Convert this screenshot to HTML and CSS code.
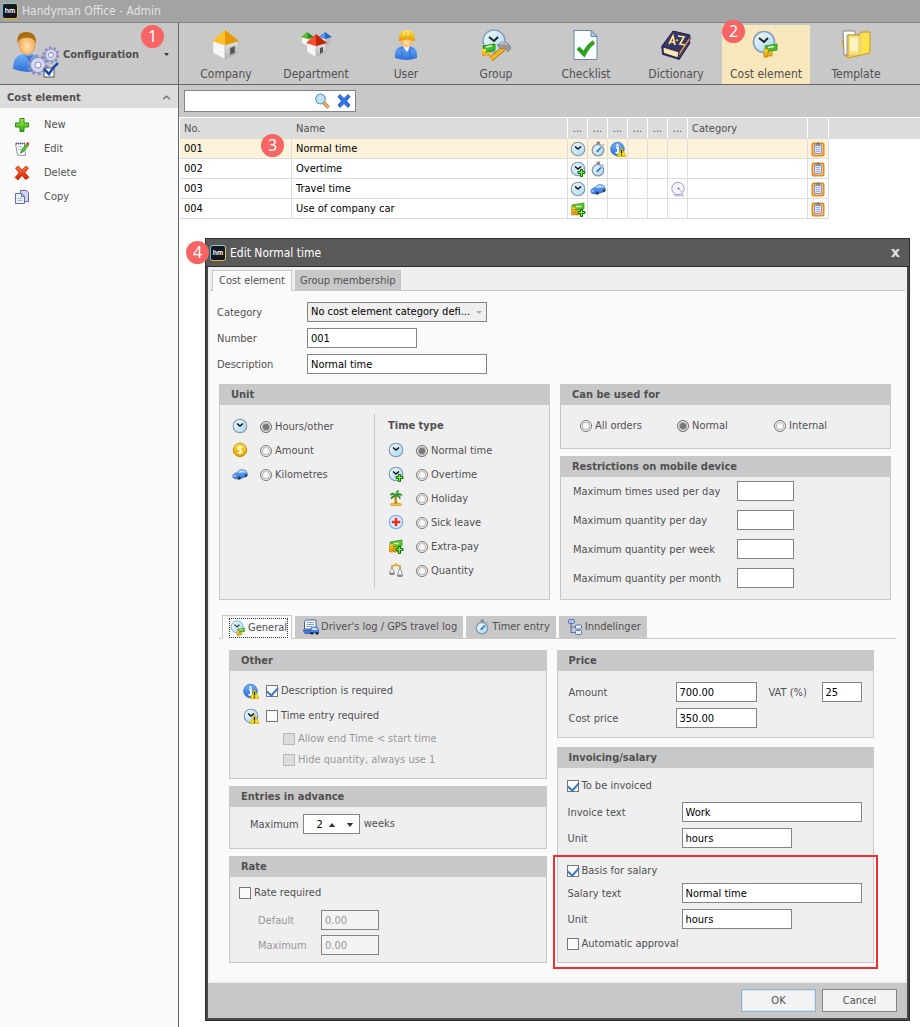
FILE: index.html
```
<!DOCTYPE html>
<html lang="en">
<head>
  <meta charset="UTF-8" />
  <meta name="viewport" content="width=device-width, initial-scale=1.0" />
  <title>Handyman Office - Admin</title>
  <link rel="stylesheet" href="styles.css">
</head>
<body>
  <!-- shared icons -->
  <svg class="sprite" aria-hidden="true">
    <defs>
      <linearGradient id="g-face" x1="0" y1="0" x2="1" y2="1"><stop offset="0" stop-color="#f4fbff"/><stop offset="1" stop-color="#a5d6f0"/></linearGradient>
      <linearGradient id="g-blue" x1="0" y1="0" x2="0" y2="1"><stop offset="0" stop-color="#6db0fa"/><stop offset="1" stop-color="#2f70d8"/></linearGradient>
      <linearGradient id="g-gold" x1="0" y1="0" x2="0" y2="1"><stop offset="0" stop-color="#ffe04a"/><stop offset="1" stop-color="#e09a00"/></linearGradient>
      <linearGradient id="g-green" x1="0" y1="0" x2="0" y2="1"><stop offset="0" stop-color="#a4f04a"/><stop offset="1" stop-color="#35ac10"/></linearGradient>
      <linearGradient id="g-red" x1="0" y1="0" x2="0" y2="1"><stop offset="0" stop-color="#ff7040"/><stop offset="1" stop-color="#d02000"/></linearGradient>
      <linearGradient id="g-wall" x1="0" y1="0" x2="0" y2="1"><stop offset="0" stop-color="#e4e4e4"/><stop offset="1" stop-color="#b4b4b4"/></linearGradient>
      <radialGradient id="g-skin" cx="0.5" cy="0.6" r="0.6"><stop offset="0" stop-color="#ffe2b0"/><stop offset="1" stop-color="#f4a048"/></radialGradient>
    </defs>
    <symbol id="clock" viewBox="0 0 16 16">
      <circle cx="8" cy="8" r="6.8" fill="url(#g-face)" stroke="#7d93a8" stroke-width="1.1"/>
      <path d="M5 5.5 8 8l3-2.500" fill="none" stroke="#111" stroke-width="1.5"/>
    </symbol>
    <symbol id="plus-small" viewBox="0 0 16 16">
      <path d="M10.5 8.5h2v2h2.500v2h-2.500v3h-2v-3H8v-2h2.500z" fill="#8af040" stroke="#0b6a0b" stroke-width="1"/>
    </symbol>
    <symbol id="warn-small" viewBox="0 0 16 16">
      <path d="M11.5 6.500 16 15.500H7z" fill="#ffe400" stroke="#b89a00" stroke-width=".6"/>
      <path d="M11.5 9v3.500M11.5 13.500v1.200" stroke="#111" stroke-width="1.3"/>
    </symbol>
    <symbol id="clock-plus" viewBox="0 0 16 16"><use href="#clock"/><use href="#plus-small"/></symbol>
    <symbol id="clock-warn" viewBox="0 0 16 16"><use href="#clock"/><use href="#warn-small"/></symbol>
    <symbol id="info-warn" viewBox="0 0 16 16">
      <circle cx="7.5" cy="8" r="6.8" fill="url(#g-blue)" stroke="#1450b8" stroke-width=".6"/>
      <path d="M7.5 3v2M6 6.500h2v5M5.500 11.800h4" fill="none" stroke="#fff" stroke-width="1.8"/>
      <use href="#warn-small"/>
    </symbol>
    <symbol id="stopwatch" viewBox="0 0 16 16">
      <path d="M7 1h2.500v2H7zM12.500 3l1.500 1.500" fill="#999" stroke="#888"/>
      <circle cx="8" cy="9.200" r="5.700" fill="url(#g-face)" stroke="#8d98a4" stroke-width="1.300"/>
      <path d="M7.500 10 11 6.500" stroke="#2468c0" stroke-width="1.400"/><circle cx="7.500" cy="10" r="1" fill="#2468c0"/>
    </symbol>
    <symbol id="car" viewBox="0 0 16 16">
      <path d="M.6 9.500Q2 6.800 5 6.400L7.500 3.900Q11 3 14 4.600L15.600 8 15 10.400 7 13.300 2 12.500Q.4 11.500.6 9.500z" fill="url(#g-blue)" stroke="#2c66c0" stroke-width=".5"/>
      <path d="M5.800 6.600 8 4.800l3-.4v2zM11.600 4.400l1.800.7.6 1.200-2.400.2z" fill="#d9ecff"/>
      <ellipse cx="7.300" cy="12" rx="1.400" ry="1.600" fill="#333"/><ellipse cx="14" cy="9.500" rx="1.100" ry="1.500" fill="#333"/>
      <path d="M1.500 10h2.500" stroke="#e8f4ff"/>
    </symbol>
    <symbol id="dish" viewBox="0 0 16 16">
      <path d="M4 12.500h8l2 2.500H5z" fill="#d4d4f0" stroke="#9a9ad0" stroke-width=".6"/>
      <circle cx="8" cy="7.500" r="6.200" fill="#f6f6ff" stroke="#9a9ad0" stroke-width="1"/>
      <path d="M12 11 8 7.500" stroke="#b0b0dc"/><circle cx="8.500" cy="7.500" r="1" fill="#6868b0"/>
    </symbol>
    <symbol id="money" viewBox="0 0 16 16">
      <path d="M2 4 14 2v6L3 9z" fill="#58c828" stroke="#258a10" stroke-width=".7"/>
      <path d="M6 5.500h5" stroke="#eaffd0" stroke-width="1.400"/>
      <path d="M1.500 6h4v8h-4zM6 9h4v5H6z" fill="url(#g-gold)" stroke="#b88400" stroke-width=".6"/>
      <path d="M1.500 8.500h4M1.500 11h4" stroke="#b88400" stroke-width=".7"/>
    </symbol>
    <symbol id="money-plus" viewBox="0 0 16 16"><use href="#money"/><use href="#plus-small"/></symbol>
    <symbol id="clipboard" viewBox="0 0 16 16">
      <rect x="2.500" y="2.500" width="11" height="12" rx="1" fill="#fff" stroke="#e68a1c" stroke-width="2"/>
      <rect x="4.500" y="4.500" width="7" height="8" fill="#dfe3f4" stroke="#7480a8" stroke-width=".8"/>
      <path d="M5.500 3.800V2.200h1.500a1 1 0 0 1 2 0h1.500v1.600z" fill="#777"/>
      <path d="M6 6.500h4M6 8.500h4M6 10.500h4" stroke="#a4acd0"/>
    </symbol>
    <symbol id="coin" viewBox="0 0 16 16">
      <circle cx="8" cy="8" r="6.700" fill="url(#g-gold)" stroke="#c99200" stroke-width="1"/>
      <path d="M10.500 5.500Q8 4 6.300 5.200 5 7 8 7.900 11 8.800 9.800 10.600 8 12 5.500 10.400M8 3.500v9" fill="none" stroke="#fff8d0" stroke-width="1.400"/>
    </symbol>
    <symbol id="palm" viewBox="0 0 16 16">
      <path d="M2 14q5-3 12 0l-1 1.500H3z" fill="#f2c53c" stroke="#cf9410" stroke-width=".6"/>
      <path d="M8 5q-1 4 0 9" fill="none" stroke="#c87a18" stroke-width="2.200"/>
      <path d="M8 5Q4 1 2 5q3-1 4 1-3 0-3 3 3-2 5-3 3 0 4 3 1-3-2-4 2-1 4 1-1-4-5-2 0-2 2-3-3-1-3 4z" fill="#2fa52c" stroke="#17781a" stroke-width=".6"/>
    </symbol>
    <symbol id="sick" viewBox="0 0 16 16">
      <circle cx="8" cy="8" r="6.700" fill="#e0f0ff" stroke="#7ab2f0" stroke-width="1.300"/>
      <path d="M6.800 3.800h2.500v3h3v2.500h-3v3H6.800v-3h-3V6.800h3z" fill="#f02a1c"/>
    </symbol>
    <symbol id="scales" viewBox="0 0 16 16">
      <path d="M3 4.500 8 3l5 1.500" fill="none" stroke="#dba31c" stroke-width="1.800"/><circle cx="8" cy="2.500" r="1.300" fill="#e8b424"/>
      <path d="M4 5 1.500 11h5zM12 5 9.500 13h5z" fill="#f6f6f6" stroke="#888" stroke-width=".8"/>
      <path d="M1 11h6l-1 2H2zM9 13h6l-1 2h-4z" fill="#888"/>
    </symbol>
    <symbol id="log" viewBox="0 0 16 16">
      <path d="M3 1h10v9H1.500V3z" fill="#fff" stroke="#3a66b0" stroke-width="1"/>
      <path d="M4 3.500h7M3.500 5.500H11M3.500 7.500H9" stroke="#7d9bd0"/>
      <path d="M0 11h8v3.500H2z" fill="#3e7be0" stroke="#1d3d80" stroke-width=".6"/>
      <path d="M7 11 9 8h5l2 3v3H7z" fill="url(#g-blue)" stroke="#1b4fa8" stroke-width=".6"/>
      <path d="M9.500 9h4l1 2h-5.500z" fill="#cfe4ff"/><circle cx="9" cy="14.300" r="1.400" fill="#222"/><circle cx="14" cy="14.300" r="1.400" fill="#222"/>
    </symbol>
    <symbol id="tree" viewBox="0 0 16 16">
      <path d="M4 4v9.500h5M4 8h5" fill="none" stroke="#5b74a8" stroke-width="1.200"/>
      <g fill="#e9effc" stroke="#5472b0"><rect x="1.500" y=".5" width="6" height="4" rx="1" fill="#a9c2f2"/><rect x="8.500" y="6" width="6" height="4" rx="1"/><rect x="8.500" y="11.500" width="6" height="4" rx="1"/></g>
    </symbol>
    <symbol id="clock-money" viewBox="0 0 32 32">
      <circle cx="14" cy="13" r="10.500" fill="url(#g-face)" stroke="#86a0bc" stroke-width="1.600"/>
      <path d="m9 9 5 4 4-4" fill="none" stroke="#222" stroke-width="2"/>
      <path d="m15 17 12-2v6l-10 2z" fill="#48c02c" stroke="#238a12" stroke-width=".8"/><path d="m18 18.500 6-1" stroke="#e4ffd0" stroke-width="1.500"/>
      <path d="M14 20h4v8h-4zM19 22h3v5h-3z" fill="url(#g-gold)" stroke="#b88400" stroke-width=".7"/>
    </symbol>
    <!-- same drawing, cropped for the tab -->
    <symbol id="clock-money-small" viewBox="2 1 27 28"><use href="#clock-money" width="32" height="32"/></symbol>
    <symbol id="arrow-down" viewBox="0 0 8 5"><path d="M0 0h8L4 5z" fill="#333"/></symbol>
    <symbol id="arrow-up" viewBox="0 0 8 5"><path d="M0 5h8L4 0z" fill="#333"/></symbol>
  </svg>

  <header class="titlebar">
    <span class="logo">hm</span>
    <span>Handyman Office - Admin</span>
  </header>

  <div class="app">
    <aside class="sidebar">
      <button class="module">
        <svg class="module-icon" viewBox="0 0 48 48">
          <path d="M2 38q0-14 11-15h8q10 2 10 12-10 10-29 3z" fill="url(#g-blue)"/>
          <path d="M13 23q4 5 9 0l-3 8z" fill="#3d6fd0"/>
          <ellipse cx="16" cy="13" rx="8" ry="11" fill="url(#g-skin)" stroke="#d08838" stroke-width=".5"/>
          <path d="M6.500 13Q5 1 15 1q11 0 10 12-1-5-6-6-6-1-9 1-3 1-3.500 5z" fill="#a86e10"/>
          <g fill="none" stroke="#8a8fc2"><circle cx="27" cy="34" r="9" stroke-width="3" stroke-dasharray="3 2.650"/><circle cx="40" cy="24" r="7" stroke-width="3" stroke-dasharray="2.500 1.900"/></g>
          <g fill="#d4d6ee" stroke="#8a8fc2"><circle cx="27" cy="34" r="7.500"/><circle cx="40" cy="24" r="6"/></g>
          <g fill="#f4f4fa" stroke="#8a8fc2"><circle cx="27" cy="34" r="3"/><circle cx="40" cy="24" r="2.500"/></g>
          <rect x="33" y="37" width="10" height="9" fill="#fff" stroke="#555"/>
          <path d="m33 38 5 5q3-6 9-11" fill="none" stroke="#1648b0" stroke-width="2.600"/>
        </svg>
        <span>Configuration</span>
        <svg class="module-arrow"><use href="#arrow-down"/></svg>
        <b class="step step-1">1</b>
      </button>
      <h2 class="nav-title">Cost element
        <svg width="7" height="5" viewBox="0 0 8 5"><path d="M0 4.500 4 1l4 3.500" fill="none" stroke="#777" stroke-width="1.800"/></svg>
      </h2>
      <nav class="nav">
        <a href="#"><svg class="icon" viewBox="0 0 16 16"><path d="M6 1.500h4V6h4.500v4H10v4.500H6V10H1.500V6H6z" fill="url(#g-green)" stroke="#2c8a14"/></svg>New</a>
        <a href="#"><svg class="icon" viewBox="0 0 16 16"><path d="M1.500 2.500h9l1 12-8-.5z" fill="#fff" stroke="#8d8fa8"/><path d="M2 2.500h9" stroke="#667" stroke-dasharray="1 1" stroke-width="2"/><path d="M4 6h4M4 8.500h3" stroke="#a8b0c8"/><path d="m6.500 12 1-3 5-6 2 1.500-5 6z" fill="#55c428" stroke="#2b7a14" stroke-width=".7"/><path d="m12 2.500 1.500-1.500 2 1.500-1 2z" fill="#e03818"/></svg>Edit</a>
        <a href="#"><svg class="icon" viewBox="0 0 16 16"><path d="m1.500 3 3-2L8 5l4-4 2.500 2L11 7.500l4 5-3.500 2L8 10.500 4 15l-3-2.500L5 8z" fill="url(#g-red)" stroke="#b02800" stroke-width=".7"/></svg>Delete</a>
        <a href="#"><svg class="icon" viewBox="0 0 16 16"><path d="M6.500 1.500h6l2 2v9h-8z" fill="#d5d5f0" stroke="#6c64a8"/><path d="M1.500 4.500h6l3 3v7h-9z" fill="#eef3ff" stroke="#5f70a8"/><path d="M7.500 4.500v3h3" fill="none" stroke="#5f70a8"/><path d="M3.500 9.500h5M3.500 11.500h5" stroke="#a4b4dc"/></svg>Copy</a>
      </nav>
    </aside>

    <main class="main">
      <div class="toolbar">
        <button class="tool">
          <svg viewBox="0 0 32 32">
            <path d="M3 12 15 16V30L3 24Z" fill="#f6f6f6" stroke="#c8c8c8" stroke-width=".5"/>
            <path d="M15 16 28 12V24L15 30Z" fill="url(#g-wall)" stroke="#aaa" stroke-width=".5"/>
            <path d="M15 1 2 12 15 16Z" fill="#fbc02c"/>
            <path d="M15 1 29 12 15 16Z" fill="#e59a00"/>
            <path d="M20 19 25 17V24L20 26Z" fill="#555" stroke="#999" stroke-width=".8"/>
          </svg>
          Company
        </button>
        <button class="tool">
          <svg viewBox="0 0 32 32">
            <path d="M2 8 8 10V17L2 14Z" fill="#f6f6f6"/><path d="M8 10 14 8V15L8 17Z" fill="#ccc"/>
            <path d="M7 3 1 8 8 10Z" fill="#58bc30"/><path d="M7 3 14 8 8 10Z" fill="#2a8c18"/>
            <path d="M19 8 25 10V17L19 14Z" fill="#f6f6f6"/><path d="M25 10 31 8V15L25 17Z" fill="#bbb"/>
            <path d="M25 3 18 8 25 10Z" fill="#5898f0"/><path d="M25 3 32 8 25 10Z" fill="#2866cc"/>
            <path d="M7 14 16 17V28L7 23Z" fill="#f6f6f6" stroke="#c8c8c8" stroke-width=".5"/>
            <path d="M16 17 26 14V23L16 28Z" fill="url(#g-wall)" stroke="#aaa" stroke-width=".5"/>
            <path d="M16 5 6 14 16 17Z" fill="#f05030"/><path d="M16 5 27 14 16 17Z" fill="#c42400"/>
            <path d="M20 19 23 18V23L20 25Z" fill="#555"/>
          </svg>
          Department
        </button>
        <button class="tool">
          <svg viewBox="0 0 32 32"><path d="M5 29q-1-11 7-12h8q8 1 7 12-10 4-22 0z" fill="url(#g-blue)"/><path d="M8 21q3-2 4-3v12M24 21q-3-2-4-3v12" fill="none" stroke="#2a66c4" stroke-width=".8"/><path d="m13 17 4 6 3-6z" fill="#fff"/><ellipse cx="16.500" cy="12" rx="6" ry="6.500" fill="url(#g-skin)"/><path d="M9 10Q9 1 16.500 1T25 10q1 2-1 2-7-3-14 0-2 0-1-2z" fill="url(#g-gold)"/><path d="M14 2v5M18 2v5" stroke="#ffef90"/></svg>
          User
        </button>
        <button class="tool">
          <svg viewBox="0 0 32 32"><circle cx="14" cy="12" r="11" fill="url(#g-face)" stroke="#86a0bc" stroke-width="1.500"/><path d="m9 8 5 4 4-4" fill="none" stroke="#222" stroke-width="2"/><path d="m3 17 12-2v6L4 24z" fill="#40bb28" stroke="#238a12"/><path d="m6 18 6-1" stroke="#e4ffd0" stroke-width="1.500"/><path d="M2 20h4v7H2zM7 23h3v4H7z" fill="url(#g-gold)"/><path d="m11 30 13-11" stroke="#b87c00" stroke-width="5"/><path d="m11 30 13-11" stroke="#f6b61c" stroke-width="3.500"/><path d="m17 16 5-3q6-1 9 6l-3 4-3-4-4 1z" fill="#9a9a9a" stroke="#666" stroke-width=".6"/><path d="m20 15 4-1.500 3 2" stroke="#e8e8e8" fill="none"/></svg>
          Group
        </button>
        <button class="tool">
          <svg viewBox="0 0 32 32"><path d="M4 1.500h17l6 6v23H4z" fill="#fafdff" stroke="#6c86a8"/><path d="M21 1.500v6h6z" fill="#aacdf0" stroke="#6c86a8"/><path d="m8 19 6 6q4-8 10-12" fill="none" stroke="#2ea01c" stroke-width="4"/></svg>
          Checklist
        </button>
        <button class="tool">
          <svg viewBox="0 0 32 32"><path d="m13 2 17 4-11 16-17-5z" fill="#38356c" stroke="#232048"/><path d="m3 18 16 5-1 6-15-5z" fill="#fbe5b0" stroke="#2c2958"/><path d="m19 23 11-16v4L18 29z" fill="#d99a4a" stroke="#2c2958"/><path d="m2 17 1 8 16 5 11-17" fill="none" stroke="#2c2958" stroke-width="1.800"/><path d="m9 15 4-8 2 9M10 12.500l4 1M16 11l2 .5M18 7l6 1-4 7 5 1" fill="none" stroke="#ffe680" stroke-width="1.700"/></svg>
          Dictionary
        </button>
        <button class="tool selected">
          <svg><use href="#clock-money"/></svg>
          Cost element
          <b class="step step-2">2</b>
        </button>
        <button class="tool">
          <svg viewBox="0 0 32 32"><path d="m1 12 4-1 3 18-3-1z" fill="#e9b418"/><path d="M3 2h12v24H4z" fill="#fff" stroke="#888"/><path d="M7 6h12v20H7z" fill="#eef1fa" stroke="#99a"/><path d="M8 6h11l2-3h9v21L8 29z" fill="#fadf58" fill-opacity=".75" stroke="#cc9a10"/><path d="M10 9h8v13h-8z" fill="#fff" fill-opacity=".5"/><path d="m22 5 7-1v19l-7 2z" fill="#ffe24a"/></svg>
          Template
        </button>
      </div>

      <div class="search">
        <div class="search-box">
          <input type="text" aria-label="Search">
          <button aria-label="Find"><svg class="icon" viewBox="0 0 16 16"><path d="m9.500 9.500 5 5" stroke="#b06a1c" stroke-width="3.200"/><path d="m9.500 9.500 5 5" stroke="#f6b050" stroke-width="2"/><circle cx="6.500" cy="6" r="4.800" fill="#bfe6f8" stroke="#6e9ab8" stroke-width="1.200"/></svg></button>
          <button aria-label="Clear"><svg class="icon" viewBox="0 0 16 16"><path d="m2 3.500 2-2 4 4 4-4 2 2-3.500 4.500 3.500 4-2 2.500-4-4-4 4-2-2.500 3.500-4z" fill="#2f75e4" stroke="#1848a8" stroke-width=".8"/></svg></button>
        </div>
      </div>

      <div class="grid-area">
        <table class="grid">
          <thead>
            <tr>
              <th class="c-no">No.</th>
              <th class="c-name">Name</th>
              <th class="c-icon">...</th><th class="c-icon">...</th><th class="c-icon">...</th>
              <th class="c-icon">...</th><th class="c-icon">...</th><th class="c-icon">...</th>
              <th class="c-cat">Category</th>
              <th class="c-last"></th>
              <th class="c-rest"></th>
            </tr>
          </thead>
          <tbody>
            <tr class="current">
              <td>001<b class="step step-3">3</b></td><td>Normal time</td>
              <td><svg class="icon"><use href="#clock"/></svg></td>
              <td><svg class="icon"><use href="#stopwatch"/></svg></td>
              <td><svg class="icon"><use href="#info-warn"/></svg></td>
              <td></td><td></td><td></td><td></td>
              <td><svg class="icon"><use href="#clipboard"/></svg></td>
            </tr>
            <tr>
              <td>002</td><td>Overtime</td>
              <td><svg class="icon"><use href="#clock-plus"/></svg></td>
              <td><svg class="icon"><use href="#stopwatch"/></svg></td>
              <td></td><td></td><td></td><td></td><td></td>
              <td><svg class="icon"><use href="#clipboard"/></svg></td>
            </tr>
            <tr>
              <td>003</td><td>Travel time</td>
              <td><svg class="icon"><use href="#clock"/></svg></td>
              <td><svg class="icon"><use href="#car"/></svg></td>
              <td></td><td></td><td></td>
              <td><svg class="icon"><use href="#dish"/></svg></td>
              <td></td>
              <td><svg class="icon"><use href="#clipboard"/></svg></td>
            </tr>
            <tr>
              <td>004</td><td>Use of company car</td>
              <td><svg class="icon"><use href="#money-plus"/></svg></td>
              <td></td><td></td><td></td><td></td><td></td><td></td>
              <td><svg class="icon"><use href="#clipboard"/></svg></td>
            </tr>
          </tbody>
        </table>
      </div>
    </main>
  </div>

  <!-- edit window -->
  <div class="dialog" role="dialog" aria-labelledby="dialog-title">
    <b class="step step-4">4</b>
    <div class="dialog-title">
      <span class="logo">hm</span>
      <span id="dialog-title">Edit Normal time</span>
      <button class="close" aria-label="Close"><svg width="9" height="8" viewBox="0 0 9 8"><path d="M0 0h3l1.500 2L6 0h3L6 4l3 4H6L4.500 6 3 8H0l3-4z" fill="#ddd"/></svg></button>
    </div>

    <div class="dialog-frame">
      <div class="tabs">
        <button class="tab active">Cost element</button>
        <button class="tab">Group membership</button>
      </div>

      <div class="page">
        <div class="fields">
          <label for="category">Category</label>
          <div class="select">
            <select id="category"><option>No cost element category defi...</option></select>
          </div>
          <label for="number">Number</label>
          <input id="number" class="w-medium" type="text" value="001">
          <label for="description">Description</label>
          <input id="description" type="text" value="Normal time">
        </div>

        <div class="columns">
          <section class="group">
            <h3>Unit</h3>
            <div class="unit">
              <div class="options">
                <div class="option"><svg class="icon"><use href="#clock"/></svg><label><input type="radio" name="unit" checked>Hours/other</label></div>
                <div class="option"><svg class="icon"><use href="#coin"/></svg><label><input type="radio" name="unit">Amount</label></div>
                <div class="option"><svg class="icon"><use href="#car"/></svg><label><input type="radio" name="unit">Kilometres</label></div>
              </div>
              <div class="options time-type">
                <h4>Time type</h4>
                <div class="option"><svg class="icon"><use href="#clock"/></svg><label><input type="radio" name="type" checked>Normal time</label></div>
                <div class="option"><svg class="icon"><use href="#clock-plus"/></svg><label><input type="radio" name="type">Overtime</label></div>
                <div class="option"><svg class="icon"><use href="#palm"/></svg><label><input type="radio" name="type">Holiday</label></div>
                <div class="option"><svg class="icon"><use href="#sick"/></svg><label><input type="radio" name="type">Sick leave</label></div>
                <div class="option"><svg class="icon"><use href="#money-plus"/></svg><label><input type="radio" name="type">Extra-pay</label></div>
                <div class="option"><svg class="icon"><use href="#scales"/></svg><label><input type="radio" name="type">Quantity</label></div>
              </div>
            </div>
          </section>

          <div class="stack">
            <section class="group">
              <h3>Can be used for</h3>
              <div class="used-for">
                <label><input type="radio" name="used">All orders</label>
                <label><input type="radio" name="used" checked>Normal</label>
                <label><input type="radio" name="used">Internal</label>
              </div>
            </section>
            <section class="group grow">
              <h3>Restrictions on mobile device</h3>
              <div class="restrictions">
                <label for="r1">Maximum times used per day</label><input id="r1" type="text">
                <label for="r2">Maximum quantity per day</label><input id="r2" type="text">
                <label for="r3">Maximum quantity per week</label><input id="r3" type="text">
                <label for="r4">Maximum quantity per month</label><input id="r4" type="text">
              </div>
            </section>
          </div>
        </div>

        <div class="tabs inner-tabs">
          <button class="tab active"><span class="focus"><svg class="icon"><use href="#clock-money-small"/></svg>General</span></button>
          <button class="tab"><svg class="icon"><use href="#log"/></svg>Driver's log / GPS travel log</button>
          <button class="tab"><svg class="icon"><use href="#stopwatch"/></svg>Timer entry</button>
          <button class="tab"><svg class="icon"><use href="#tree"/></svg>Inndelinger</button>
        </div>

        <div class="columns inner-columns">
          <div class="stack">
            <section class="group">
              <h3>Other</h3>
              <div class="other">
                <div class="check-row"><svg class="icon"><use href="#info-warn"/></svg><label><input type="checkbox" checked>Description is required</label></div>
                <div class="check-row"><svg class="icon"><use href="#clock-warn"/></svg><label><input type="checkbox">Time entry required</label></div>
                <div class="check-row sub"><label><input type="checkbox" disabled>Allow end Time &lt; start time</label></div>
                <div class="check-row sub"><label><input type="checkbox" disabled>Hide quantity, always use 1</label></div>
              </div>
            </section>
            <section class="group">
              <h3>Entries in advance</h3>
              <div class="advance">
                <label for="weeks">Maximum</label>
                <div class="spin">
                  <input id="weeks" type="text" value="2">
                  <button aria-label="More"><svg><use href="#arrow-up"/></svg></button>
                  <button aria-label="Less"><svg><use href="#arrow-down"/></svg></button>
                </div>
                <span>weeks</span>
              </div>
            </section>
            <section class="group grow">
              <h3>Rate</h3>
              <div class="rate">
                <label class="check"><input type="checkbox">Rate required</label>
                <div class="rate-fields">
                  <label for="rate-default">Default</label><input id="rate-default" type="text" value="0.00" disabled>
                  <label for="rate-max">Maximum</label><input id="rate-max" type="text" value="0.00" disabled>
                </div>
              </div>
            </section>
          </div>

          <div class="stack">
            <section class="group price-group">
              <h3>Price</h3>
              <div class="price">
                <label for="amount">Amount</label><input id="amount" type="text" value="700.00">
                <label for="vat">VAT (%)</label><input id="vat" type="text" value="25">
                <label for="cost">Cost price</label><input id="cost" type="text" value="350.00">
              </div>
            </section>
            <section class="group grow">
              <h3>Invoicing/salary</h3>
              <div class="invoice">
                <label class="check"><input type="checkbox" checked>To be invoiced</label>
                <div class="fields">
                  <label for="inv-text">Invoice text</label><input id="inv-text" type="text" value="Work">
                  <label for="inv-unit">Unit</label><input id="inv-unit" class="w-medium" type="text" value="hours">
                </div>
              </div>
              <div class="salary">
                <label class="check"><input type="checkbox" checked>Basis for salary</label>
                <div class="fields">
                  <label for="sal-text">Salary text</label><input id="sal-text" type="text" value="Normal time">
                  <label for="sal-unit">Unit</label><input id="sal-unit" class="w-medium" type="text" value="hours">
                </div>
                <label class="check"><input type="checkbox">Automatic approval</label>
              </div>
            </section>
          </div>
        </div>
      </div>

      <div class="dialog-footer">
        <button class="btn primary">OK</button>
        <button class="btn">Cancel</button>
      </div>
    </div>
  </div>
</body>
</html>
```
FILE: styles.css
```
* {
  box-sizing: border-box;
}

body {
  margin: 0;
  min-height: 100vh;
  position: relative;
  display: flex;
  flex-direction: column;
  background: #fff;
  color: #505050;
  font: 11px/16px Tahoma, "DejaVu Sans Condensed", "DejaVu Sans", sans-serif;
}

h2, h3, h4 {
  margin: 0;
  font-size: 11px;
}

button, input, select {
  font: inherit;
  color: inherit;
}

button {
  padding: 0;
  border: none;
  background: none;
}

.sprite {
  position: absolute;
  width: 0;
  height: 0;
}

.icon {
  width: 16px;
  height: 16px;
  flex: none;
}

.logo {
  flex: none;
  width: 16px;
  height: 16px;
  border: 1px solid;
  border-color: #7ed0cc #d8c070 #f0b020 #6ab8d8;
  border-radius: 3px;
  background: #14171f;
  color: #fff;
  font: bold 7px/13px "Liberation Sans", sans-serif;
  text-align: center;
}

/* red step numbers */
.step {
  position: absolute;
  z-index: 2;
  width: 23px;
  height: 23px;
  border-radius: 50%;
  background: #f76464;
  color: #fff;
  font: 16px/22px "Noto Sans", sans-serif;
  text-align: center;
}

.step-1 { left: 141px; top: 2px; }
.step-2 { left: 0; top: -5px; }
.step-3 { right: 7px; top: -5px; }
.step-4 { left: -20px; top: 2px; }

/* main window */
.titlebar {
  display: flex;
  align-items: center;
  gap: 4px;
  height: 23px;
  padding: 0 2px;
  background: #a3a3a3;
  border-bottom: 1px solid #848484;
  color: #e2e2e2;
  font-size: 12px;
}

.app {
  flex: 1;
  display: flex;
}

.sidebar {
  flex: none;
  width: 179px;
  background: #fafafa;
  border-right: 1px solid #666;
}

.module {
  position: relative;
  display: flex;
  align-items: center;
  width: 100%;
  height: 62px;
  padding: 2px 9px 0 11px;
  background: #c8c8c8;
  border-bottom: 1px solid #666;
  font-weight: bold;
}

.module-icon {
  width: 48px;
  height: 48px;
  margin-right: 4px;
}

.module-arrow {
  width: 5px;
  height: 3px;
  margin-left: auto;
}

.nav-title {
  display: flex;
  align-items: center;
  justify-content: space-between;
  height: 23px;
  padding: 2px 8px 0 7px;
  background: #dcdcdc;
}

.nav {
  padding-top: 5px;
}

.nav a {
  display: flex;
  align-items: center;
  gap: 14px;
  height: 24px;
  padding-left: 14px;
  color: inherit;
  text-decoration: none;
}

.main {
  flex: 1;
  min-width: 0;
}

.toolbar {
  display: flex;
  gap: 2px;
  height: 62px;
  padding: 2px 0 0 3px;
  background: #c8c8c8;
  border-bottom: 1px solid #666;
}

.tool {
  position: relative;
  display: flex;
  flex-direction: column;
  align-items: center;
  gap: 5px;
  width: 88px;
  padding-top: 4px;
  font-size: 12px;
}

.tool svg {
  width: 32px;
  height: 32px;
  flex: none;
}

.tool.selected {
  background: #f8e7bc;
}

.search {
  height: 32px;
  padding: 5px;
  background: #c8c8c8;
}

.search-box {
  display: flex;
  align-items: center;
  gap: 6px;
  width: 172px;
  height: 22px;
  padding-right: 3px;
  background: #fff;
  border: 1px solid #848484;
}

.search-box input {
  flex: 1;
  min-width: 0;
  border: none;
  background: none;
}

.search-box button {
  height: 16px;
}

.grid-area {
  padding-left: 1px;
  border-top: 1px solid #fff;
}

.grid {
  width: 100%;
  table-layout: fixed;
  border-collapse: separate;
  border-spacing: 0;
  color: #000;
}

.grid th, .grid td {
  height: 20px;
  padding: 0 4px;
  text-align: left;
  border-right: 1px solid #dcdcdc;
  border-bottom: 1px solid #dcdcdc;
  position: relative;
}

.grid th {
  height: 21px;
  padding-top: 2px;
  background: #dcdcdc;
  border-right-color: #fff;
  color: #505050;
  font-weight: normal;
}

.grid .icon {
  display: block;
  margin: 0 auto;
}

.grid td:nth-child(n+3) {
  padding: 0;
}

.c-no { width: 112px; }
.c-name { width: 276px; }
.c-icon { width: 20px; }
.c-cat { width: 120px; }
.c-last { width: 21px; }

.grid .c-icon {
  text-align: center;
}

.grid .c-no, .grid .c-rest {
  border-right-color: #dcdcdc;
}

.current td {
  background: #fdf3da;
}

/* edit window */
.dialog {
  position: absolute;
  left: 205px;
  right: 10px;
  top: 238px;
  border: 1px solid #2b2d30;
  background: #46484b;
}

.dialog-title {
  display: flex;
  align-items: center;
  gap: 4px;
  height: 28px;
  padding: 0 9px 0 4px;
  background: #5a5a5a;
  border-bottom: 1px solid #2b2d30;
  color: #fff;
  font-size: 12px;
}

.close {
  display: flex;
  margin-left: auto;
}

.dialog-frame {
  margin: 0 2px 2px;
  background: #efefef;
}

.tabs {
  display: flex;
  align-items: flex-end;
  gap: 3px;
  margin: 0 2px;
  padding: 3px 2px 0;
  border-bottom: 1px solid #c8c8c8;
}

.tab {
  display: flex;
  align-items: center;
  height: 20px;
  padding: 1px 5px 0;
  background: #c8c8c8;
}

.tab.active {
  height: 21px;
  padding: 0 6px;
  margin-bottom: -1px;
  background: #fafafa;
  border: 1px solid #c8c8c8;
  border-bottom: none;
}

.page {
  margin: 0 2px 2px;
  padding: 11px 14px 18px 7px;
  background: #fafafa;
}

.fields {
  display: grid;
  grid-template-columns: 90px 180px;
  gap: 6px 0;
  align-items: center;
}

.page label {
  padding-top: 1px;
}

.page input[type="text"], .page select {
  width: 100%;
  height: 20px;
  padding: 0 3px;
  border: 1px solid #848484;
  border-radius: 0;
  background: #fff;
  color: #000;
}

.page input.w-medium {
  width: 110px;
}

.page input[type="text"]:disabled {
  background: #f3f3f3;
  color: #989898;
}

.select {
  position: relative;
}

.page select {
  appearance: none;
  display: block;
  background: #efefef;
}

.select::after {
  content: "";
  position: absolute;
  right: 5px;
  top: 9px;
  border: 3px solid transparent;
  border-top-color: #aaa;
  border-bottom: none;
}

.columns {
  display: grid;
  grid-template-columns: 1fr 1fr;
  gap: 10px;
  margin: 10px 0 0 2px;
}

.stack {
  display: flex;
  flex-direction: column;
  gap: 7px;
}

.grow {
  flex: 1;
}

.group {
  background: #efefef;
  border: 1px solid #c8c8c8;
}

.group h3 {
  height: 20px;
  padding: 2px 11px;
  background: #c8c8c8;
}

.unit {
  display: flex;
  padding: 9px 12px 11px;
}

.options {
  width: 142px;
}

.time-type {
  height: 174px;
  padding-left: 13px;
  border-left: 1px solid #c8c8c8;
}

.options h4 {
  height: 24px;
  line-height: 24px;
}

.option {
  display: flex;
  align-items: center;
  gap: 12px;
  height: 24px;
  white-space: nowrap;
}

.option label, .used-for label, .check, .check-row label {
  display: flex;
  align-items: center;
  gap: 3px;
}

/* radios and tick boxes */
input[type="radio"] {
  appearance: none;
  width: 12px;
  height: 12px;
  margin: 0;
  border: 1px solid #777;
  border-radius: 50%;
  background: #fafafa;
  box-shadow: inset 0 0 0 1px #fafafa, inset 0 0 0 2px #b8b8b8;
}

input[type="radio"]:checked {
  background: #777;
  box-shadow: inset 0 0 0 1px #fafafa, inset 0 0 0 2px #a8a8a8;
}

input[type="checkbox"] {
  appearance: none;
  display: grid;
  place-items: center;
  width: 12px;
  height: 12px;
  margin: 0;
  border: 1px solid #777;
  background: #fafafa;
}

input[type="checkbox"]:checked::before {
  content: "";
  width: 9px;
  height: 5px;
  border: solid #3a78c0;
  border-width: 0 0 2px 2px;
  transform: translateY(-1px) rotate(-48deg);
}

input[type="checkbox"]:disabled {
  border-color: #b8b8b8;
  background: #dcdcdc;
}

.used-for {
  display: grid;
  grid-template-columns: 97px 97px 97px;
  height: 43px;
  padding-left: 19px;
}

.used-for label {
  height: 40px;
}

.restrictions {
  display: grid;
  grid-template-columns: 164px 57px;
  gap: 9px 0;
  align-items: center;
  padding: 4px 12px 10px;
}

/* lower tabs */
.inner-tabs {
  margin: 12px -5px 0 2px;
  padding-left: 3px;
}

.inner-tabs .tab {
  height: 22px;
  padding: 0 6px 0 8px;
}

.inner-tabs .tab.active {
  height: 24px;
  padding: 0 4px 0 7px;
}

.inner-tabs .icon {
  margin-right: 2px;
}

.focus {
  display: flex;
  align-items: center;
  height: 18px;
  outline: 1px dotted #333;
}

.inner-columns {
  margin: 11px 17px 0 12px;
}

.price-group {
  margin-bottom: 2px;
}

.other {
  padding: 7px 13px 8px;
}

.check-row {
  display: flex;
  align-items: center;
  gap: 7px;
  height: 25px;
}

.check-row.sub {
  height: 21px;
  padding-left: 40px;
  color: #989898;
}

.advance {
  display: flex;
  align-items: center;
  gap: 4px;
  padding: 7px 20px 14px;
}

.spin {
  display: flex;
  align-items: center;
  width: 57px;
  border: 1px solid #848484;
  background: #fff;
}

.page .spin input {
  width: 19px;
  height: 18px;
  padding: 0;
  border: none;
  text-align: right;
}

.spin button {
  flex: 1;
  height: 18px;
  line-height: 12px;
}

.spin svg {
  width: 8px;
  height: 4px;
}

.rate {
  padding: 7px 9px 7px;
}

.check {
  height: 17px;
}

.rate-fields {
  display: grid;
  grid-template-columns: 63px 58px;
  gap: 5px 0;
  align-items: center;
  padding: 9px 0 0 19px;
  color: #989898;
}

.price {
  display: grid;
  grid-template-columns: 107px 81px 12px 53px 40px;
  gap: 6px 0;
  align-items: center;
  padding: 11px 11px 9px;
}

.price label[for="vat"] {
  grid-column: 4;
}

.invoice {
  padding: 9px 9px 8px;
}

.invoice .fields, .salary .fields {
  grid-template-columns: 114px 180px;
  padding: 8px 0 0 1px;
}

.salary {
  position: relative;
  padding: 6px 9px 10px;
}

.salary .fields {
  padding: 4px 0 6px 1px;
}

/* highlight drawn round the salary settings */
.salary::after {
  content: "";
  position: absolute;
  inset: -1px -5px -7px;
  border: 2px solid #f03030;
  pointer-events: none;
}

.dialog-footer {
  display: flex;
  justify-content: flex-end;
  gap: 6px;
  padding: 6px 10px 6px;
  background: #c8c8c8;
}

.btn {
  width: 75px;
  height: 23px;
  background: #f3f3f3;
  border: 1px solid #848484;
}

.btn.primary {
  border-color: #94b4cc;
  box-shadow: inset 0 0 0 1px #cde6f7;
}
```
